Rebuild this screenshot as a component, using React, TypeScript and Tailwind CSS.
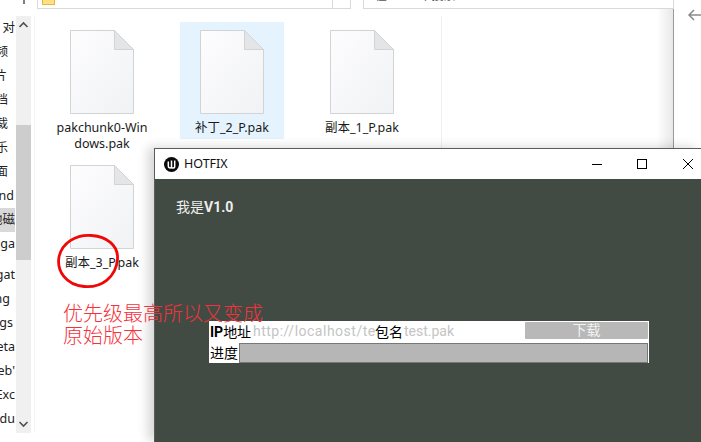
const SANS = "font-['Noto_Sans','Noto_Sans_CJK_SC',sans-serif]";

function FileIcon() {
  return (
    <svg width="64" height="84" viewBox="0 0 64 84" className="block shrink-0">
      <defs>
        <linearGradient id="pg" x1="0" y1="0" x2="1" y2="1">
          <stop offset="0" stopColor="#fdfdfe" />
          <stop offset="1" stopColor="#f1f2f5" />
        </linearGradient>
      </defs>
      <path d="M0.5 0.5H44.5L63.5 19.5V83.5H0.5Z" fill="url(#pg)" stroke="#d2d3d5" />
      <path d="M44.5 0.5V19.5H63.5Z" fill="#e4e5e7" stroke="#d2d3d5" />
    </svg>
  );
}

function FileCell({ name, selected, narrow }: { name: string; selected?: boolean; narrow?: boolean }) {
  return (
    <div
      className={`flex h-[117px] w-[104px] flex-col items-center pt-2 ${selected ? "bg-[#e5f3ff]" : ""}`}
    >
      <FileIcon />
      <p
        className={`mt-[6px] shrink-0 text-center text-[12.5px] leading-[16px] break-all text-[#1a1a1a] ${narrow ? "w-[92px]" : "w-[100px]"}`}
      >
        {name}
      </p>
    </div>
  );
}

// the sidebar is clipped on the left, pad says how far each label stops from the scrollbar
const SIDE_ROWS: { label: string; pad: string; top?: string; active?: boolean }[] = [
  { label: "对", pad: "pr-0" },
  { label: "频", pad: "pr-[7px]" },
  { label: "片", pad: "pr-[8px]" },
  { label: "档", pad: "pr-[7px]" },
  { label: "裁", pad: "pr-[7px]" },
  { label: "乐", pad: "pr-[7px]" },
  { label: "面", pad: "pr-[7px]" },
  { label: "nd", pad: "pr-[1px]" },
  { label: "地磁", pad: "pr-0", active: true },
  { label: "aga", pad: "pr-0" },
  { label: "gat", pad: "pr-0", top: "mt-[7px]" },
  { label: "ng", pad: "pr-[5px]" },
  { label: "gs", pad: "pr-[2px]" },
  { label: "eta", pad: "pr-0" },
  { label: "eb'", pad: "pr-0" },
  { label: "Exc", pad: "pr-0" },
  { label: "idu", pad: "pr-0" },
];

function Sidebar() {
  return (
    <div className="flex h-[433px] w-[16px] shrink-0 flex-col overflow-hidden pt-[7px]">
      {SIDE_ROWS.map((r) => (
        <div
          key={r.label}
          className={`${r.top ?? ""} ${r.pad} flex h-[24px] w-[15px] shrink-0 items-center justify-end overflow-hidden text-[12.5px] leading-[16px] text-[#222] ${r.active ? "bg-[#d9d9d9]" : ""}`}
        >
          <span className="block shrink-0 whitespace-nowrap">{r.label}</span>
        </div>
      ))}
    </div>
  );
}

function Scrollbar() {
  return (
    <div className="mt-[7px] flex h-[417px] w-[15px] shrink-0 flex-col items-center bg-[#f0f0f0]">
      <svg width="15" height="17" viewBox="0 0 15 17" className="shrink-0">
        <path d="M3.5 11L7.5 7L11.5 11" fill="none" stroke="#505050" strokeWidth="1.6" />
      </svg>
      <div className="mt-[92px] h-[135px] w-full bg-[#cdcdcd]" />
      <svg width="15" height="17" viewBox="0 0 15 17" className="mt-auto shrink-0">
        <path d="M3.5 6L7.5 10L11.5 6" fill="none" stroke="#505050" strokeWidth="1.6" />
      </svg>
    </div>
  );
}

function Explorer() {
  return (
    <div className="flex h-full w-full flex-col bg-white">
      {/* address and search boxes are cut off by the top edge of the screenshot */}
      <div className="flex h-[9px] shrink-0">
        <div className="ml-[23px] h-[4px] w-[2px] bg-[#808080]" />
        <div className="ml-[12px] flex h-[9px] w-[314px] items-end overflow-hidden border-r border-b border-l border-[#d9d9d9] text-[12px] leading-[14px] text-[#111]">
          <div className="mb-[3px] ml-[4px] h-[6px] w-[13px] shrink-0 border border-[#e6b93a] bg-[#ffe083]" />
          <span className="mb-[5px] ml-[25px] shrink-0 tracking-[1px]">HOTFIX</span>
          <span className="mb-[5px] ml-[9px] shrink-0 text-[#888]">›</span>
          <span className="mb-[5px] ml-[12px] shrink-0">Content</span>
          <span className="mb-[5px] ml-[9px] shrink-0 text-[#888]">›</span>
          <span className="mb-[5px] ml-[10px] shrink-0">Paks</span>
          <div className="ml-auto h-full w-[18px] shrink-0 border-l border-[#d9d9d9]" />
        </div>
        <div className="ml-[12px] flex h-[9px] w-[311px] items-end overflow-hidden border-r border-b border-l border-[#d9d9d9] text-[12px] leading-[14px] text-[#555]">
          <span className="mb-[5px] ml-[11px] shrink-0">在 Paks 中搜索</span>
        </div>
      </div>
      <div className="flex min-h-0 flex-1">
        <Sidebar />
        <Scrollbar />
        <div className="mt-[7px] ml-[3px] h-[417px] w-px shrink-0 bg-[#f5f5f5]" />
        <div className="ml-[15px] grid h-[140px] w-[391px] shrink-0 grid-cols-[104px_104px_104px] gap-x-[26px] pt-[13px]">
          <FileCell name="pakchunk0-Windows.pak" narrow />
          <FileCell name="补丁_2_P.pak" selected />
          <FileCell name="副本_1_P.pak" />
          <div className="mt-[18px]">
            <FileCell name="副本_3_P.pak" />
          </div>
        </div>
        <div className="mt-[7px] h-[132px] w-px shrink-0 bg-[#f0f0f0]" />
        <div className="h-[139px] w-[232px] shrink-0 border-r border-[#9a9a9a] bg-gradient-to-r from-white from-[93%] to-[#e8e8e8]" />
        <div className="-mt-[1px] pl-[13px]">
          <svg width="15" height="14" viewBox="0 0 15 14" className="shrink-0">
            <path d="M15 7H2M7 2L2 7L7 12" fill="none" stroke="#8a8a8a" strokeWidth="1.5" />
          </svg>
        </div>
      </div>
    </div>
  );
}

function UnrealLogo() {
  return (
    <svg width="15" height="15" viewBox="0 0 15 15" className="shrink-0">
      <circle cx="7.5" cy="7.5" r="7.5" fill="#0a0a0a" />
      <path
        d="M4.3 4.6V9C4.3 11 6.3 11.4 7.5 10.2M7.5 3.4V10.2C8.5 11.6 9.9 11.3 10.9 10M10.7 3.6V10"
        fill="none"
        stroke="#ffffff"
        strokeWidth="1.5"
      />
    </svg>
  );
}

function HotfixWindow() {
  return (
    <div className="absolute top-[148px] left-[154px] flex h-[294px] w-[547px] flex-col border-t border-l border-[#5c5c5c] shadow-[-6px_-1px_10px_rgba(0,0,0,0.16)]">
      <div className="flex h-[30px] shrink-0 items-center bg-white pl-[9px]">
        <UnrealLogo />
        <span className="ml-[5px] text-[12.5px] text-[#111]">HOTFIX</span>
        <div className="ml-auto flex items-center">
          <svg width="10" height="10" viewBox="0 0 10 10" className="mr-[35px]">
            <path d="M0 5.5H10" stroke="#000" strokeWidth="1" />
          </svg>
          <svg width="10" height="10" viewBox="0 0 10 10" className="mr-[36px]">
            <rect x="0.5" y="0.5" width="9" height="9" fill="none" stroke="#000" />
          </svg>
          <svg width="10" height="10" viewBox="0 0 10 10" className="mr-[8px]">
            <path d="M0 0L10 10M10 0L0 10" stroke="#000" strokeWidth="1" />
          </svg>
        </div>
      </div>
      <div className="flex-1 bg-[#424b43] pt-[18px] pl-[21px]">
        <p className="text-[14px] leading-[20px] text-[#eeeeee]">
          我是<span className="font-['Roboto',sans-serif] font-bold">V1.0</span>
        </p>
        <div className="mt-[104px] ml-[33px] w-[440px] bg-white text-[14px] leading-[21px]">
          <div className="flex h-[21px] items-center pl-px">
            <span className="w-[43px] shrink-0 whitespace-nowrap text-black">
              <span className="font-['Roboto',sans-serif] font-bold">IP</span>地址
            </span>
            <span className="w-[122px] shrink-0 overflow-hidden font-['Roboto',sans-serif] tracking-[0.5px] whitespace-nowrap text-[#c4c4c4]">
              http://localhost/test
            </span>
            <span className="w-[29px] shrink-0 whitespace-nowrap text-black">包名</span>
            <span className="w-[121px] shrink-0 font-['Roboto',sans-serif] text-[#c4c4c4]">test.pak</span>
            <button
              type="button"
              className="mb-[3px] h-[17px] w-[123px] shrink-0 rounded-[1px] bg-[#b8b8b8] text-[14px] leading-[16px] text-[#f2f2f2]"
            >
              下载
            </button>
          </div>
          <div className="flex h-[21px] items-center pl-px">
            <span className="w-[29px] shrink-0 text-black">进度</span>
            <div className="h-[20px] w-[409px] border border-[#777] bg-[#b6b6b6]" />
          </div>
        </div>
      </div>
    </div>
  );
}

// hand-drawn markup sitting on top of both windows
function Annotation() {
  return (
    <>
      <svg
        width="64"
        height="56"
        viewBox="0 0 64 56"
        className="pointer-events-none absolute top-[233px] left-[56px]"
      >
        <path
          d="M36 2.5C20 1 6 10 3 24C0.5 38 10 52 28 53.5C46 55 60 44 61.5 26C62.5 12 50 3.5 36 2.5"
          fill="none"
          stroke="#f00808"
          strokeWidth="2.8"
        />
      </svg>
      <p className="pointer-events-none absolute top-[303px] left-[63px] text-[20px] leading-[22px] font-light text-[#f4323c]">
        优先级最高所以又变成
        <br />
        原始版本
      </p>
    </>
  );
}

export default function App() {
  return (
    <div className={`relative h-[442px] w-[701px] overflow-hidden bg-white ${SANS}`}>
      <Explorer />
      <HotfixWindow />
      <Annotation />
    </div>
  );
}
